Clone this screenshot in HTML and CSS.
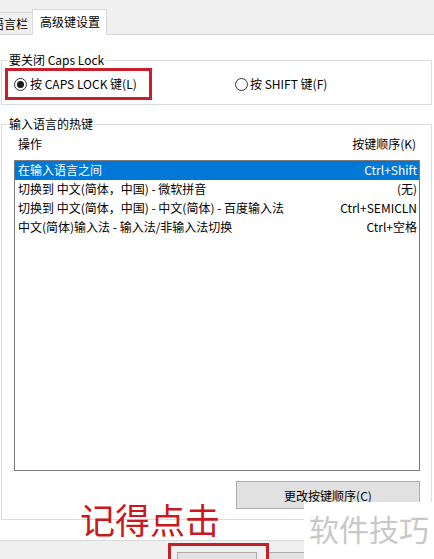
FILE: index.html
```html
<!DOCTYPE html>
<html lang="zh-CN">
<head>
  <meta charset="UTF-8">
  <meta name="viewport" content="width=device-width, initial-scale=1.0">
  <title>文本服务和输入语言 - 高级键设置</title>
  <link rel="stylesheet" href="styles.css">
</head>
<body>
  <div class="dialog">
    <div class="tabs">
      <div class="tab">语言栏</div>
      <div class="tab active">高级键设置</div>
    </div>

    <div class="pane">
      <fieldset class="group caps">
        <legend>要关闭 Caps Lock</legend>
        <div class="radio-row">
          <label class="radio mark"><span class="dot checked"></span>按 CAPS LOCK 键(L)</label>
          <label class="radio second"><span class="dot"></span>按 SHIFT 键(F)</label>
        </div>
      </fieldset>

      <fieldset class="group hotkeys">
        <legend>输入语言的热键</legend>
        <div class="list-head">
          <span>操作</span>
          <span>按键顺序(K)</span>
        </div>
        <div class="list">
          <div class="row selected"><span>在输入语言之间</span><span>Ctrl+Shift</span></div>
          <div class="row"><span>切换到 中文(简体，中国) - 微软拼音</span><span>(无)</span></div>
          <div class="row"><span>切换到 中文(简体，中国) - 中文(简体) - 百度输入法</span><span>Ctrl+SEMICLN</span></div>
          <div class="row"><span>中文(简体)输入法 - 输入法/非输入法切换</span><span>Ctrl+空格</span></div>
        </div>
        <div class="actions">
          <button class="btn wide">更改按键顺序(C)</button>
        </div>
      </fieldset>
    </div>

    <div class="footer">
      <button class="btn">确定</button>
      <button class="btn">取消</button>
      <button class="btn">应用(A)</button>
    </div>
  </div>

  <!-- annotations laid over the screenshot -->
  <div class="note">记得点击</div>
  <div class="note-box"></div>
  <div class="watermark">软件技巧</div>
</body>
</html>
```

FILE: styles.css
```css
body {
  margin: 0;
  width: 434px;
  height: 559px;
  overflow: hidden;
  position: relative;
  background-color: #f0f0f0;
  font-family: "Noto Sans CJK SC", "Liberation Sans", sans-serif;
  font-size: 12px;
  line-height: 16px;
  color: #000;
}

.dialog {
  width: 434px;
}

/* tab strip */
.tabs {
  display: flex;
  align-items: flex-end;
  height: 34px;
}

.tab {
  height: 22px;
  line-height: 21px;
  padding: 0 4px;
  margin-left: -12px;
  border-top: 1px solid #d9d9d9;
  background-color: #f0f0f0;
  box-sizing: border-box;
}

.tab.active {
  position: relative;
  z-index: 1;
  height: 26px;
  line-height: 23px;
  margin-left: 0;
  margin-bottom: -1px;
  padding: 0 6px 0 7px;
  border: 1px solid #d9d9d9;
  border-bottom: none;
  background-color: #fff;
}

.pane {
  width: 440px;
  margin-left: -1px;
  padding: 17px 0 20px 0;
  border: 1px solid #d9d9d9;
  background-color: #fff;
  box-sizing: border-box;
}

/* group boxes */
.group {
  width: 431px;
  margin: 0 0 0 1px;
  border: 1px solid #dcdcdc;
  box-sizing: border-box;
  min-inline-size: 0;
}

.group legend {
  padding: 0 1px;
  line-height: 16px;
}

.caps {
  padding: 0 0 4px 3px;
}

.caps legend {
  margin-left: 3px;
}

.hotkeys {
  margin-top: 11px;
  padding: 0 11px 10px 12px;
}

.hotkeys legend {
  margin-left: -6px;
}

.radio-row {
  display: flex;
  align-items: center;
}

.radio {
  display: flex;
  align-items: center;
  gap: 3px;
  height: 32px;
  box-sizing: border-box;
}

.radio.mark {
  width: 147px;
  padding-left: 6px;
  border: 3px solid #c8202a;
}

.radio.second {
  margin-left: 83px;
  gap: 2px;
}

.dot {
  width: 13px;
  height: 13px;
  border: 1px solid #333;
  border-radius: 50%;
  box-sizing: border-box;
  display: flex;
  align-items: center;
  justify-content: center;
}

.dot.checked::after {
  content: "";
  width: 7px;
  height: 7px;
  border-radius: 50%;
  background-color: #1a1a1a;
}

/* hotkey list */
.list-head {
  display: flex;
  justify-content: space-between;
  padding: 4px 4px 8px 4px;
}

.list {
  height: 311px;
  border: 1px solid #7a7a7a;
  box-sizing: border-box;
}

.row {
  display: flex;
  justify-content: space-between;
  height: 19px;
  line-height: 18px;
  padding: 0 2px 0 3px;
}

.row.selected {
  background-color: #0078d7;
  color: #fff;
}

.actions {
  display: flex;
  justify-content: flex-end;
  margin-top: 10px;
}

.btn {
  width: 87px;
  height: 34px;
  padding: 0;
  font-family: inherit;
  font-size: 12px;
  color: #000;
  background-color: #e1e1e1;
  border: 1px solid #adadad;
}

.btn.wide {
  width: 184px;
  height: 28px;
}

.footer {
  display: flex;
  gap: 9px;
  padding: 11px 0 0 177px;
}

/* annotations */
.note {
  position: absolute;
  left: 80px;
  top: 500px;
  font-size: 35px;
  line-height: 38px;
  color: #c9191f;
}

.note-box {
  position: absolute;
  left: 168px;
  top: 543px;
  width: 101px;
  height: 24px;
  border: 3px solid #c62026;
  box-sizing: border-box;
}

.watermark {
  position: absolute;
  left: 304px;
  top: 502px;
  width: 130px;
  height: 57px;
  padding: 6px 0 0 5px;
  box-sizing: border-box;
  background-color: #fff;
  font-size: 30px;
  line-height: 40px;
  color: #c8c8c8;
}
```
